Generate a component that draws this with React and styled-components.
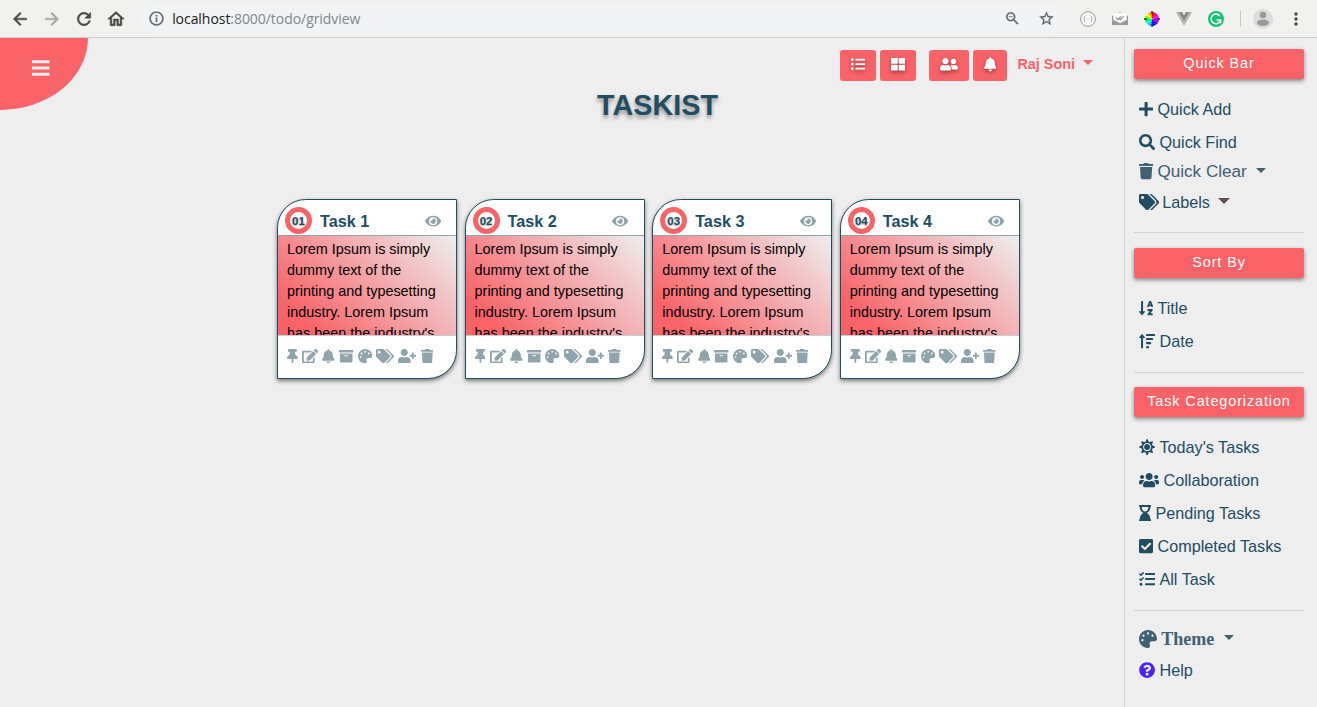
import React from "react";
import styled, { createGlobalStyle, css } from "styled-components";
import {
  FaArchive, FaBars, FaBell, FaCheckSquare, FaEdit, FaEye, FaHourglassEnd, FaListUl,
  FaPalette, FaPlus, FaQuestionCircle, FaSearch, FaSortAlphaDown, FaSortAmountUp, FaSun,
  FaTags, FaTasks, FaThLarge, FaThumbtack, FaTrash, FaUserFriends, FaUserPlus, FaUsers,
} from "react-icons/fa";
import {
  MdArrowBack, MdArrowForward, MdRefresh, MdOutlineHome, MdInfoOutline, MdZoomOut,
  MdStarBorder, MdMoreVert,
} from "react-icons/md";

const coral = "#f96368";
const navy = "#214d63";
const sans = '"Liberation Sans", Arial, sans-serif';

const GlobalStyle = createGlobalStyle`
  * { box-sizing: border-box; }
  body { margin: 0; background: #eee; font-family: ${sans}; overflow: hidden; }
  svg { display: block; flex: none; }
`;

const Page = styled.div`
  display: flex;
  flex-direction: column;
  width: 1317px;
  height: 707px;
  background: #eee;
`;

/* Font Awesome glyph: $units is the glyph's width on the 512-unit grid */
const Glyph = styled.span`
  flex: none;
  margin-top: ${(p) => p.$drop || 0}px;
  margin-right: ${(p) => p.$after || 0}px;
  svg {
    height: ${(p) => p.$size}px;
    width: ${(p) => (p.$size * (p.$units || 512)) / 512}px;
  }
`;

/* Browser toolbar */
const Browser = styled.header`
  display: flex;
  align-items: center;
  height: 38px;
  flex: none;
  padding: 0 11px 0 10px;
  background: #f1f1ef;
  border-bottom: 1px solid #ccc;
  color: #494949;
  path[fill="none"] { stroke: none; }
`;
const NavButtons = styled.div`
  display: flex;
  gap: 12px;
  width: 130px;
  svg { stroke-width: 0.6px; }
`;
const Faded = styled.span`
  color: #a5a5a5;
`;
const AddressBar = styled.div`
  display: flex;
  align-items: center;
  width: 931px;
  height: 28px;
  padding: 0 9px;
  border-radius: 14px;
  background: #f1f3f4;
  color: #5f6368;
  svg { stroke-width: 0.3px; }
`;
const Url = styled.span`
  flex: 1;
  margin-left: 7px;
  font: 14px/20px "Open Sans", "Noto Sans", sans-serif;
  letter-spacing: -0.05px;
  color: #80868b;
  b { font-weight: 400; color: #202124; }
`;
const AddressActions = styled.div`
  display: flex;
  gap: 17px;
`;
const Extensions = styled.div`
  display: flex;
  align-items: center;
  gap: 16px;
  margin-left: 16px;
`;
const Divider = styled.span`
  width: 1px;
  height: 16px;
  background: #c9c9c9;
`;
const Profile = styled.div`
  display: flex;
  align-items: center;
  gap: 13px;
  margin-left: -4px;
`;

/* Workspace */
const Workspace = styled.div`
  display: flex;
  flex: 1;
  min-height: 0;
`;
const MenuCorner = styled.button`
  display: flex;
  width: 88px;
  height: 72px;
  flex: none;
  padding: 20px 0 0 32px;
  border: 0;
  border-bottom-right-radius: 100%;
  background: ${coral};
  color: #eee;
`;
const Board = styled.main`
  flex: 1;
  display: flex;
  flex-direction: column;
`;
const TopNav = styled.nav`
  display: flex;
  align-items: center;
  justify-content: flex-end;
  margin-top: 12px;
  padding-right: 31.5px;
  height: 31px;
`;
const NavButton = styled.button`
  display: flex;
  align-items: center;
  justify-content: center;
  width: ${(p) => p.$width}px;
  height: 31px;
  margin-right: ${(p) => p.$after}px;
  padding: 0 0 2px;
  border: 0;
  border-radius: 3px;
  background: ${coral};
  color: #fff;
  svg { filter: drop-shadow(0 2px 2px rgba(0, 0, 0, 0.4)); }
`;
const UserName = styled.span`
  display: flex;
  align-items: center;
  height: 31px;
  padding-bottom: 4px;
  font: bold 14.4px/28px ${sans};
  color: ${coral};
`;
const Caret = styled.i`
  margin: 0 0 2px ${(p) => p.$gap}px;
  border: ${(p) => p.$size}px solid transparent;
  border-top-color: ${(p) => p.$color || "currentColor"};
  border-bottom: 0;
`;
const Title = styled.h1`
  margin: 8px 0 0 103px;
  font: bold 28.8px/33px ${sans};
  text-align: center;
  color: ${navy};
  text-shadow: 0 3px 4px rgba(0, 0, 0, 0.4);
`;
const Cards = styled.div`
  display: flex;
  gap: 7.6px;
  margin: 77px 0 0 189px;
`;

/* Task card */
const Card = styled.article`
  width: 180px;
  height: 180px;
  flex: none;
  border: 1px solid ${navy};
  border-radius: 28.8px 0;
  background: #fff;
  box-shadow: 0 2px 4px rgba(0, 0, 0, 0.5);
`;
const CardHead = styled.div`
  display: flex;
  align-items: center;
  height: 36px;
  padding: 7px 15px 1px 7px;
  border-bottom: 1px solid #90a2ac;
  color: #90a4ae;
`;
const Badge = styled.span`
  width: 27px;
  height: 27px;
  border: 5px solid ${coral};
  border-radius: 50%;
  font: bold 11.5px/18px ${sans};
  text-align: center;
  color: ${navy};
  text-shadow: 0 1px 2px rgba(0, 0, 0, 0.4);
`;
const CardTitle = styled.h2`
  flex: 1;
  margin: 0 0 0 8px;
  font: bold 16.2px/20px ${sans};
  color: ${navy};
`;
const CardBody = styled.p`
  height: 100px;
  margin: 0;
  padding: 3px 9px 0;
  overflow: hidden;
  border-bottom: 1px solid #c5cdd1;
  background: linear-gradient(45deg, ${coral} 14%, #eee);
  font: 14.4px/21px ${sans};
  color: #000;
`;
const CardActions = styled.div`
  display: flex;
  gap: 4.2px;
  padding: 12.6px 0 0 9px;
  color: #90a4ae;
`;

/* Sidebar */
const Sidebar = styled.aside`
  width: 193px;
  flex: none;
  padding: 11px 13px 0 9px;
  border-left: 1px solid #d4d4d4;
`;
const Heading = styled.h3`
  height: 30px;
  margin: 0;
  border-radius: 2px;
  background: ${coral};
  box-shadow: 0 2px 4px rgba(0, 0, 0, 0.45);
  font: 14.4px/28px ${sans};
  letter-spacing: 0.9px;
  text-align: center;
  color: #fff;
`;
const Rule = styled.hr`
  height: 1px;
  margin: ${(p) => p.$before}px 0 ${(p) => p.$after}px;
  border: 0;
  background: #d4d4d4;
`;
const Links = styled.div`
  padding-top: 14px;
`;
const Link = styled.a`
  display: flex;
  align-items: center;
  height: ${(p) => p.$height || 33}px;
  padding: 0 0 1px 4.7px;
  font: ${(p) => p.$font || 16.2}px/20px ${sans};
  color: ${(p) => (p.$soft ? "#406074" : navy)};
  svg { color: ${(p) => p.$iconColor || "inherit"}; }
  ${(p) => p.$serif && css`
    font: bold 18px/22px "Liberation Serif", "Times New Roman", serif;
  `}
`;

function JsonBadge() {
  return (
    <svg width="16" height="16" viewBox="0 0 16 16" fill="none">
      <circle cx="8" cy="8" r="7.4" fill="#fafafa" stroke="#999" />
      <g stroke="#999" strokeWidth=".9">
        <polyline points="5.4,5.2 4.4,5.7 4.4,7.3 3.6,8 4.4,8.7 4.4,10.3 5.4,10.8" />
        <polyline points="10.6,5.2 11.6,5.7 11.6,7.3 12.4,8 11.6,8.7 11.6,10.3 10.6,10.8" />
        <line x1="6.5" y1="8" x2="7.3" y2="8" />
        <line x1="8.7" y1="8" x2="9.5" y2="8" />
      </g>
    </svg>
  );
}
function MailBadge() {
  return (
    <svg width="16" height="14" viewBox="0 0 16 14">
      <path d="M0 4 8 0l8 4v9H0z" fill="#999" />
      <path d="M1.3 1.8Q1.5.8 8 .8t6.7 1V8L8 11 1.3 8z" fill="#fff" />
      <g fill="none" stroke="#888" strokeWidth="1.1">
        <path d="m4.2 5.6 1.7 2 3-3.3M7.5 7l.9.7 3.2-3.6" />
      </g>
    </svg>
  );
}
const wheelHues = ["#f00", "#f0a", "#f0f", "#a0f", "#50f", "#00f", "#0af", "#0fc", "#0f4", "#5f0", "#ff0", "#f90"];
function ColorWheel() {
  return (
    <svg width="16" height="16" viewBox="-8 -8 16 16">
      {wheelHues.map((hue, i) => (
        <path key={hue} d="M0 0V-7A7 7 0 0 1 3.5-6.06z" fill={hue} transform={`rotate(${i * 30})`} />
      ))}
      <path d="M0-8v3M0 8V5M-8 0h3M8 0H5" stroke="#333" strokeWidth="1.4" />
    </svg>
  );
}
function VueMark() {
  return (
    <svg width="16" height="14" viewBox="0 0 16 14">
      <path d="M0 0h5l3 5 3-5h5L8 14z" fill="#b5b5b5" />
      <path d="M3 0h3l2 3.4L10 0h3L8 8.8z" fill="#858585" />
    </svg>
  );
}
function GrammarMark() {
  return (
    <svg width="16" height="16" viewBox="0 0 16 16" fill="none" stroke="#fff" strokeWidth="1.5">
      <circle cx="8" cy="8" r="8" fill="#15c377" stroke="none" />
      <path d="M11.8 5A4.8 4.8 0 1 0 12.6 9M8.7 9h3.9v3.3" />
    </svg>
  );
}
function Avatar() {
  return (
    <svg width="20" height="20" viewBox="0 0 20 20" fill="#999">
      <circle cx="10" cy="10" r="10" fill="#dcdcdc" />
      <circle cx="10" cy="6" r="3.2" />
      <ellipse cx="10" cy="13.8" rx="6" ry="3.2" />
    </svg>
  );
}

const actionIcons = [
  [FaThumbtack, 384], [FaEdit, 576], [FaBell, 448], [FaArchive, 512],
  [FaPalette, 512], [FaTags, 640], [FaUserPlus, 640], [FaTrash, 448],
];

function TaskCard({ number }) {
  return (
    <Card>
      <CardHead>
        <Badge>0{number}</Badge>
        <CardTitle>Task {number}</CardTitle>
        <Glyph $size={14.4} $units={576} $drop={2}><FaEye /></Glyph>
      </CardHead>
      <CardBody>Lorem Ipsum is simply dummy text of the printing and typesetting industry. Lorem Ipsum has been the industry's</CardBody>
      <CardActions>
        {actionIcons.map(([Icon, units], i) => (
          <Glyph key={i} $size={14.4} $units={units}><Icon /></Glyph>
        ))}
      </CardActions>
    </Card>
  );
}

function SideIcon({ icon: Icon, units, size = 16.2, after = 4.6 }) {
  return <Glyph $size={size} $units={units} $after={after}><Icon /></Glyph>;
}

export default function App() {
  return (
    <Page>
      <GlobalStyle />
      <Browser>
        <NavButtons>
          <MdArrowBack size={20} />
          <Faded><MdArrowForward size={20} /></Faded>
          <MdRefresh size={20} />
          <MdOutlineHome size={20} />
        </NavButtons>
        <AddressBar>
          <MdInfoOutline size={17} />
          <Url><b>localhost</b>:8000/todo/gridview</Url>
          <AddressActions>
            <MdZoomOut size={17} />
            <MdStarBorder size={17} />
          </AddressActions>
        </AddressBar>
        <Extensions>
          <JsonBadge />
          <MailBadge />
          <ColorWheel />
          <VueMark />
          <GrammarMark />
          <Divider />
          <Profile>
            <Avatar />
            <MdMoreVert size={20} />
          </Profile>
        </Extensions>
      </Browser>
      <Workspace>
        <MenuCorner aria-label="Menu"><Glyph $size={20} $units={448}><FaBars /></Glyph></MenuCorner>
        <Board>
          <TopNav>
            <NavButton $width={36} $after={4}><Glyph $size={14.4}><FaListUl /></Glyph></NavButton>
            <NavButton $width={36} $after={13}><Glyph $size={14.4}><FaThLarge /></Glyph></NavButton>
            <NavButton $width={40} $after={4}><Glyph $size={14.4} $units={640}><FaUserFriends /></Glyph></NavButton>
            <NavButton $width={34} $after={10.5}><Glyph $size={14.4} $units={448}><FaBell /></Glyph></NavButton>
            <UserName>Raj Soni<Caret $size={5} $gap={7.5} /></UserName>
          </TopNav>
          <Title>TASKIST</Title>
          <Cards>
            {[1, 2, 3, 4].map((n) => <TaskCard key={n} number={n} />)}
          </Cards>
        </Board>
        <Sidebar>
          <Heading>Quick Bar</Heading>
          <Links>
            <Link><SideIcon icon={FaPlus} units={448} />Quick Add</Link>
            <Link><SideIcon icon={FaSearch} />Quick Find</Link>
            <Link $soft $height={26} $font={17.1}>
              <SideIcon icon={FaTrash} units={448} />Quick Clear<Caret $size={5} $gap={9} />
            </Link>
            <Link $height={35}>
              <SideIcon icon={FaTags} units={640} after={3.2} />Labels<Caret $size={6} $gap={8} $color="#5f4f4e" />
            </Link>
          </Links>
          <Rule $before={12} $after={15} />
          <Heading>Sort By</Heading>
          <Links>
            <Link><SideIcon icon={FaSortAlphaDown} units={448} />Title</Link>
            <Link><SideIcon icon={FaSortAmountUp} />Date</Link>
          </Links>
          <Rule $before={14} $after={14} />
          <Heading>Task Categorization</Heading>
          <Links>
            <Link><SideIcon icon={FaSun} />Today's Tasks</Link>
            <Link><SideIcon icon={FaUsers} units={640} />Collaboration</Link>
            <Link><SideIcon icon={FaHourglassEnd} units={384} />Pending Tasks</Link>
            <Link><SideIcon icon={FaCheckSquare} units={448} />Completed Tasks</Link>
            <Link><SideIcon icon={FaTasks} />All Task</Link>
          </Links>
          <Rule $before={14} $after={11} />
          <Link $soft $serif $height={34}>
            <SideIcon icon={FaPalette} size={18} after={4.5} />Theme<Caret $size={5.5} $gap={10} />
          </Link>
          <Link $iconColor="#4d21ff" $height={29}><SideIcon icon={FaQuestionCircle} />Help</Link>
        </Sidebar>
      </Workspace>
    </Page>
  );
}
